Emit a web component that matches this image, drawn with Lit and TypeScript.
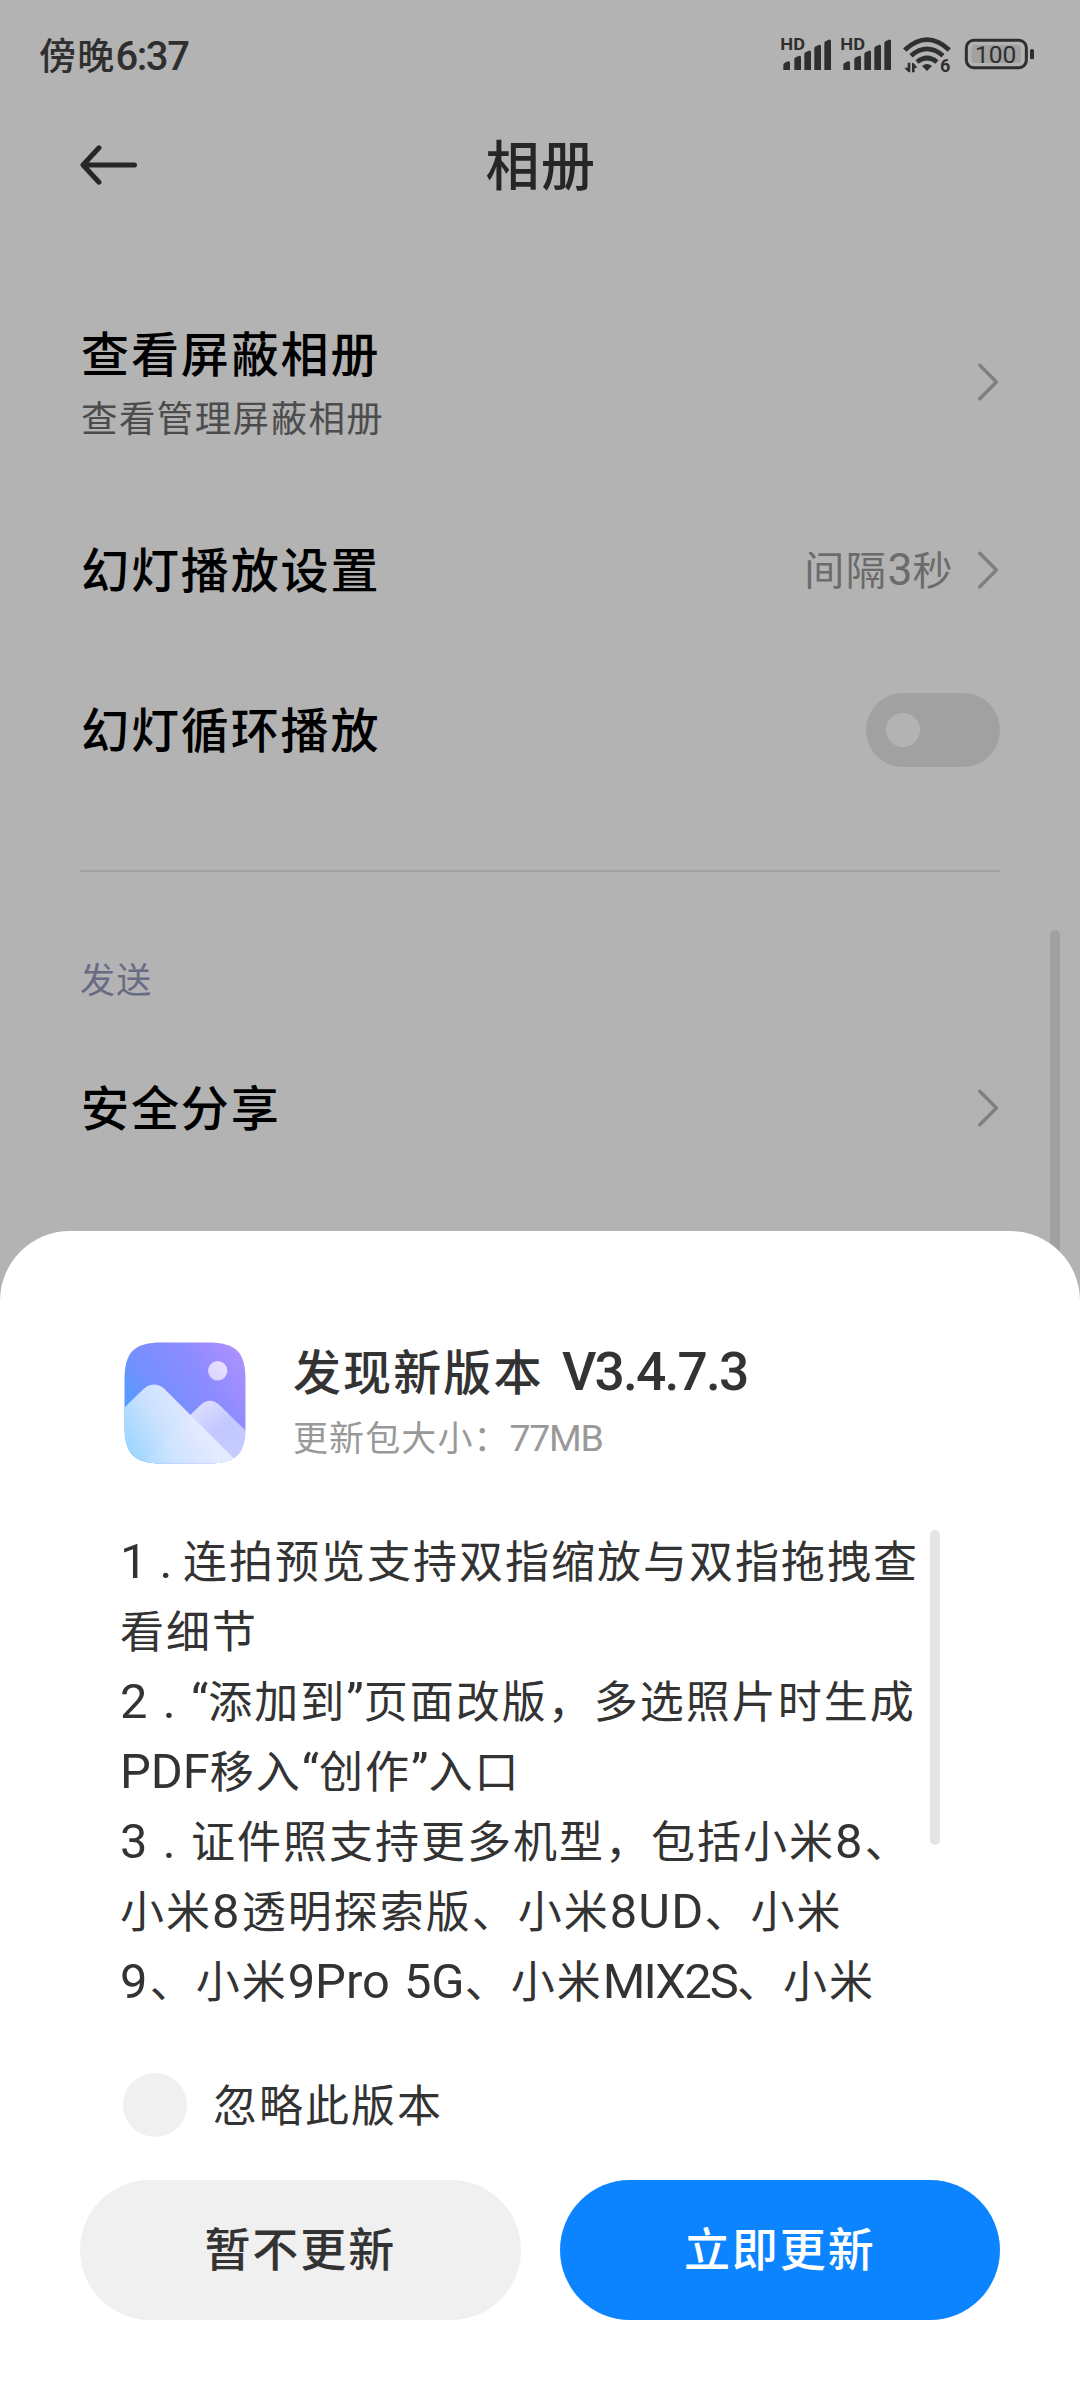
import { LitElement, html, css, svg } from "lit";
import { customElement, property } from "lit/decorators.js";

const runClass = (run: string) => {
  if (/^\d$/.test(run)) return "latin digit";
  if (/^\d[A-Z]+$/.test(run)) return "latin loose";
  if (/^MI/.test(run)) return "latin tight";
  return "latin";
};

/** Wraps Latin letters, digits and quotes so they take the Latin face. */
const mixed = (text: string) =>
  text
    .split(/([\x20-\x7e“”]+)/)
    .filter((part) => part)
    .map((part) =>
      /^[\x20-\x7e“”]/.test(part) ? html`<span class=${runClass(part)}>${part}</span>` : part
    );

const latinCss = css`
  .latin {
    font-family: "Roboto", "Noto Sans CJK SC", sans-serif;
    font-size: 1.11em;
    line-height: 0;
    letter-spacing: 0;
    white-space: pre;
  }
`;

@customElement("status-bar")
class StatusBar extends LitElement {
  static styles = [
    latinCss,
    css`
      :host {
        display: flex;
        justify-content: space-between;
        align-items: center;
        height: 70px;
        margin-top: 20px;
        padding: 0 20px 0 39px;
        color: #2f2f2f;
      }
      .time {
        font-size: 37px;
        letter-spacing: 1.2px;
        line-height: 64px;
        height: 66px;
        font-weight: 500;
      }
      .time .latin {
        font-size: 1.08em;
        letter-spacing: -1.4px;
      }
      .icons {
        display: block;
        font-family: "Roboto", sans-serif;
      }
    `,
  ];

  private signal(x: number) {
    const bars = [
      [0, 122],
      [33, 106],
      [63, 90],
      [93, 73],
      [123, 57],
    ];
    return svg`
      <text x=${x - 9} y="90" font-size="48" font-weight="700" textLength="74" lengthAdjust="spacingAndGlyphs">HD</text>
      ${bars.map(
        ([dx, top]) => svg`<path d="M${x + dx} 150V${top + 12}Q${x + dx} ${top + 8} ${x + dx + 5} ${top + 6}L${x + dx + 13} ${top + 2}Q${x + dx + 20} ${top} ${x + dx + 20} ${top + 6}V150Z"/>`
      )}`;
  }

  render() {
    return html`
      <div class="time">${mixed("傍晚6:37")}</div>
      <svg class="icons" width="300" height="70" viewBox="0 0 900 210" fill="#2f2f2f">
        ${this.signal(70)} ${this.signal(250)}
        <g fill="none" stroke="#2f2f2f" stroke-width="14">
          <path d="M434 90Q501 28 568 90" />
          <path d="M453 107Q501 66 549 107" />
          <path d="M471 126Q501 102 531 126" />
        </g>
        <path d="M486 138Q501 126 516 138L501 153Z" />
        <path d="M443 128h8v29q-8 0-18-14h10zM456 157V128q10 2 15 16h-7v13z" />
        <text x="540" y="157" font-size="54" font-weight="700">6</text>
        <rect x="635" y="75" width="148" height="54" rx="8" fill="#a1a1a1" />
        <rect x="619" y="61" width="180" height="82" rx="22" fill="none" stroke="#2f2f2f" stroke-width="9" />
        <rect x="810" y="87" width="12" height="31" rx="5" />
        <text x="645" y="128" font-size="70" textLength="124" lengthAdjust="spacingAndGlyphs">100</text>
      </svg>
    `;
  }
}

@customElement("setting-row")
class SettingRow extends LitElement {
  @property() label = "";
  @property() hint = "";
  @property() value = "";
  @property() kind = "link";

  static styles = [
    latinCss,
    css`
      :host {
        display: flex;
        align-items: center;
        justify-content: space-between;
        padding: 0 80px 0 81px;
      }
      .label {
        font-size: 48px;
        font-weight: 500;
        letter-spacing: 1.9px;
        line-height: 64px;
        color: #000;
        margin-top: -7px;
      }
      .with-hint {
        padding-top: 10px;
      }
      .hint {
        font-size: 36.5px;
        letter-spacing: 1.4px;
        line-height: 64px;
        margin-top: 2px;
        color: #4c4c4c;
      }
      .end {
        display: flex;
        align-items: center;
      }
      .value {
        font-size: 40px;
        letter-spacing: 1.6px;
        line-height: 60px;
        margin: -5px 24px 0 0;
        color: #6b6b6b;
      }
      .chevron {
        display: block;
        margin-right: 2px;
      }
      .toggle {
        width: 134px;
        height: 74px;
        border-radius: 37px;
        background: #a1a1a1;
        box-sizing: border-box;
        padding: 20px;
      }
      .knob {
        width: 34px;
        height: 34px;
        border-radius: 50%;
        background: #b3b3b3;
      }
    `,
  ];

  render() {
    return html`
      <div class=${this.hint ? "with-hint" : ""}>
        <div class="label">${this.label}</div>
        ${this.hint ? html`<div class="hint">${this.hint}</div>` : ""}
      </div>
      <div class="end">
        ${this.value ? html`<div class="value">${mixed(this.value)}</div>` : ""}
        ${this.kind === "toggle"
          ? html`<div class="toggle"><div class="knob"></div></div>`
          : html`<svg class="chevron" width="20" height="38" viewBox="0 0 20 38">
              <path d="M1.8 2.2L18.4 19L1.8 35.8" fill="none" stroke="#7f7f7f" stroke-width="3.4" stroke-linecap="round" stroke-linejoin="round" />
            </svg>`}
      </div>
    `;
  }
}

@customElement("update-sheet")
class UpdateSheet extends LitElement {
  static styles = [
    latinCss,
    css`
      :host {
        display: flex;
        flex-direction: column;
        box-sizing: border-box;
        background: #fff;
        border-radius: 70px 70px 0 0;
        padding: 111px 80px 80px;
        color: #333;
      }
      .head {
        display: flex;
        gap: 47px;
        padding-left: 44px;
        height: 122px;
      }
      .icon {
        display: block;
      }
      .title {
        font-size: 48px;
        font-weight: 500;
        letter-spacing: 2.1px;
        line-height: 54px;
        white-space: pre;
      }
      .title .latin {
        letter-spacing: -1.8px;
        word-spacing: 7px;
      }
      .size {
        font-size: 35px;
        letter-spacing: 1.1px;
        line-height: 72px;
        margin-top: 4px;
        color: #999;
      }
      .size .latin {
        font-size: 1.07em;
        letter-spacing: -1.3px;
      }
      .notes {
        display: flex;
        justify-content: space-between;
        margin-top: 60px;
        padding: 0 60px 0 40px;
        height: 496px;
      }
      .line {
        font-size: 44px;
        letter-spacing: 2px;
        line-height: 70px;
        height: 70px;
        white-space: pre;
      }
      .line .digit {
        letter-spacing: 2.2px;
      }
      .line .loose {
        letter-spacing: 1.2px;
      }
      .line .tight {
        letter-spacing: -1.8px;
      }
      .line .latin {
        word-spacing: 2px;
      }
      .ordinal {
        display: inline-block;
        width: 71px;
        letter-spacing: 0.6px;
      }
      .ordinal.narrow {
        width: 63px;
        letter-spacing: -1px;
      }
      .bar {
        width: 10px;
        height: 315px;
        margin-top: 6px;
        border-radius: 5px;
        background: #e4e4e4;
      }
      .ignore {
        display: flex;
        align-items: center;
        gap: 26px;
        padding-left: 43px;
        margin-top: 53px;
        height: 64px;
        font-size: 44px;
        letter-spacing: 2px;
      }
      .check {
        width: 64px;
        height: 64px;
        border-radius: 50%;
        background: #f0f0f0;
      }
      .ignore-label {
        line-height: 60px;
        margin-top: -5px;
      }
      .actions {
        display: flex;
        gap: 39px;
        margin-top: 43px;
      }
      .button {
        flex: 1;
        height: 140px;
        border-radius: 70px;
        text-align: center;
        font-size: 46px;
        font-weight: 500;
        letter-spacing: 1.9px;
        line-height: 133px;
        background: #f0f0f0;
      }
      .primary {
        background: #0d84ff;
        color: #fff;
      }
    `,
  ];

  private lines: { no?: string; text: string }[] = [
    { no: "1 . ", text: "连拍预览支持双指缩放与双指拖拽查" },
    { text: "看细节" },
    { no: "2 . ", text: "“添加到”页面改版，多选照片时生成" },
    { text: "PDF移入“创作”入口" },
    { no: "3 . ", text: "证件照支持更多机型，包括小米8、" },
    { text: "小米8透明探索版、小米8UD、小米" },
    { text: "9、小米9Pro 5G、小米MIX2S、小米" },
  ];

  private ordinal(no: string) {
    const narrow = no.startsWith("1") ? "narrow" : "";
    return html`<span class="latin ordinal ${narrow}">${no}</span>`;
  }

  render() {
    return html`
      <div class="head">
        <svg class="icon" width="122" height="122" viewBox="0 0 122 122">
          <defs>
            <linearGradient id="sky" gradientUnits="userSpaceOnUse" x1="-4" y1="70" x2="112" y2="-6">
              <stop offset="0" stop-color="#4b9fff" />
              <stop offset="0.3" stop-color="#758fff" />
              <stop offset="0.65" stop-color="#8d8cff" />
              <stop offset="1" stop-color="#b191ff" />
            </linearGradient>
            <linearGradient id="front" gradientUnits="userSpaceOnUse" x1="0" y1="112" x2="68" y2="72">
              <stop offset="0" stop-color="#96d4ff" />
              <stop offset="0.55" stop-color="#c9e1ff" />
              <stop offset="1" stop-color="#e1e8ff" />
            </linearGradient>
            <linearGradient id="back" gradientUnits="userSpaceOnUse" x1="76" y1="60" x2="112" y2="116">
              <stop offset="0" stop-color="#dcdfff" />
              <stop offset="0.5" stop-color="#c2c8ff" />
              <stop offset="1" stop-color="#c6ccff" />
            </linearGradient>
            <linearGradient id="sun" x1="0" y1="1" x2="1" y2="0">
              <stop offset="0" stop-color="#d5d3ff" />
              <stop offset="1" stop-color="#ebe2ff" />
            </linearGradient>
            <clipPath id="tile">
              <path d="M0.5 38C0.5 10 10 0.5 38 0.5H84C112 0.5 121.5 10 121.5 38V84C121.5 112 112 121.5 84 121.5H38C10 121.5 0.5 112 0.5 84Z" />
            </clipPath>
          </defs>
          <g clip-path="url(#tile)">
            <rect width="122" height="122" fill="url(#sky)" />
            <circle cx="93.7" cy="28.8" r="9.7" fill="url(#sun)" />
            <path d="M60 79L76 63.5Q86 54 96 63.5L122 89V122H60Z" fill="url(#back)" />
            <path d="M0 66L20 46.5Q30 38.5 40 46.5L109 115.5L116 122H0Z" fill="url(#front)" />
            <path d="M66.3 73.3L18 122H116L109 115.5Z" fill="#fff" fill-opacity="0.1" />
          </g>
        </svg>
        <div>
          <div class="title">${mixed("发现新版本 V3.4.7.3")}</div>
          <div class="size">${mixed("更新包大小：77MB")}</div>
        </div>
      </div>
      <div class="notes">
        <div>
          ${this.lines.map(
            (l) => html`<div class="line">${l.no ? this.ordinal(l.no) : ""}${mixed(l.text)}</div>`
          )}
        </div>
        <div class="bar"></div>
      </div>
      <div class="ignore">
        <div class="check"></div>
        <div class="ignore-label">忽略此版本</div>
      </div>
      <div class="actions">
        <div class="button">暂不更新</div>
        <div class="button primary">立即更新</div>
      </div>
    `;
  }
}

@customElement("app-root")
class AppRoot extends LitElement {
  static styles = css`
    :host {
      display: flex;
      flex-direction: column;
      position: relative;
      width: 1080px;
      height: 2400px;
      overflow: hidden;
      background: #b3b3b3;
      font-family: "Noto Sans CJK SC", sans-serif;
    }
    .header {
      display: grid;
      grid-template-columns: 1fr auto 1fr;
      align-items: center;
      height: 80px;
      margin-top: 35px;
      padding: 0 80px;
      color: #262626;
    }
    .title {
      font-size: 54px;
      font-weight: 500;
      letter-spacing: 1.5px;
      line-height: 74px;
      margin: -4px 0 0 2px;
    }
    .back {
      display: block;
    }
    .blocked {
      height: 130px;
      margin-top: 112px;
    }
    .interval {
      height: 100px;
      margin-top: 73px;
    }
    .loop {
      height: 100px;
      margin-top: 60px;
    }
    .divider {
      height: 2px;
      margin: 90px 80px 0;
      background: #a1a1a1;
    }
    .section {
      margin: 76px 80px 0;
      font-size: 35px;
      letter-spacing: 1.2px;
      line-height: 60px;
      color: #676b83;
    }
    .share {
      height: 100px;
      margin-top: 50px;
    }
    .scrollbar {
      position: absolute;
      left: 1050px;
      top: 930px;
      width: 10px;
      height: 500px;
      border-radius: 5px;
      background: #a1a1a1;
    }
    .sheet {
      position: absolute;
      left: 0;
      right: 0;
      top: 1231px;
      bottom: 0;
    }
  `;

  render() {
    return html`
      <status-bar></status-bar>
      <div class="header">
        <svg class="back" width="58" height="40" viewBox="0 0 58 40">
          <path d="M19 2.8L3 20L19 37.2M3.5 20H54.5" fill="none" stroke="#262626" stroke-width="5" stroke-linecap="round" stroke-linejoin="round" />
        </svg>
        <div class="title">相册</div>
        <div></div>
      </div>
      <setting-row class="blocked" label="查看屏蔽相册" hint="查看管理屏蔽相册"></setting-row>
      <setting-row class="interval" label="幻灯播放设置" value="间隔3秒"></setting-row>
      <setting-row class="loop" label="幻灯循环播放" kind="toggle"></setting-row>
      <div class="divider"></div>
      <div class="section">发送</div>
      <setting-row class="share" label="安全分享"></setting-row>
      <div class="scrollbar"></div>
      <update-sheet class="sheet"></update-sheet>
    `;
  }
}
